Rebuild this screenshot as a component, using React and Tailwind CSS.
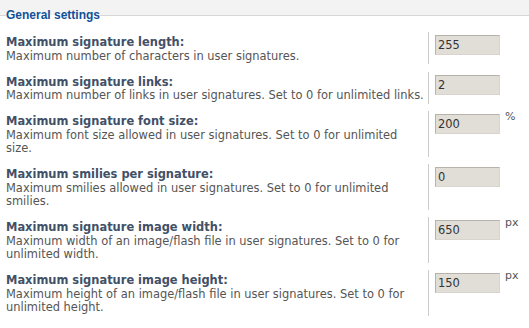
import React from "react";

const rows = [
  { label: "Maximum signature length:", explain: "Maximum number of characters in user signatures.", value: "255" },
  { label: "Maximum signature links:", explain: "Maximum number of links in user signatures. Set to 0 for unlimited links.", value: "2" },
  { label: "Maximum signature font size:", explain: "Maximum font size allowed in user signatures. Set to 0 for unlimited size.", value: "200", unit: "%" },
  { label: "Maximum smilies per signature:", explain: "Maximum smilies allowed in user signatures. Set to 0 for unlimited smilies.", value: "0" },
  { label: "Maximum signature image width:", explain: "Maximum width of an image/flash file in user signatures. Set to 0 for unlimited width.", value: "650", unit: "px" },
  { label: "Maximum signature image height:", explain: "Maximum height of an image/flash file in user signatures. Set to 0 for unlimited height.", value: "150", unit: "px" },
];

export default function App() {
  return (
    <div className="w-[529px] h-[328px] overflow-hidden bg-[#f3f3f3] pt-[8px]" style={{ fontFamily: '"DejaVu Sans", Verdana, sans-serif' }}>
      <fieldset className="border-t border-[#d7d7d7] bg-white pl-[6px] h-[400px]">
        <legend className="text-[12px] leading-[14px] font-bold text-[#115098] px-0" style={{ fontFamily: '"Liberation Sans", Tahoma, Arial, sans-serif' }}>
          General settings
        </legend>
        <div className="flex flex-col gap-[7.5px] pt-[10px]">
          {rows.map((r) => (
            <div key={r.label} className="flex">
              <div className="w-[423px] shrink-0 border-r border-[#cccccc] pt-[4px] pb-[1px] text-[11.45px] leading-[13.5px]">
                <div className="w-[419px]">
                  <div className="font-bold text-[#425067]">{r.label}</div>
                  <div className="text-[#555555]">{r.explain}</div>
                </div>
              </div>
              <div className="flex items-start pl-[6px] pt-[3px]">
                <div className="w-[65px] h-[20px] bg-[#e1ded7] border border-t-[#b8b3aa] border-l-[#b8b3aa] border-b-[#d9d5ce] border-r-[#d9d5ce] text-[11.45px] leading-[18px] pl-[2px] text-[#333333]">
                  {r.value}
                </div>
                {r.unit && (
                  <span className="text-[11px] leading-[13px] text-[#555555] pl-[5px] -mt-[4px]">{r.unit}</span>
                )}
              </div>
            </div>
          ))}
        </div>
      </fieldset>
    </div>
  );
}
